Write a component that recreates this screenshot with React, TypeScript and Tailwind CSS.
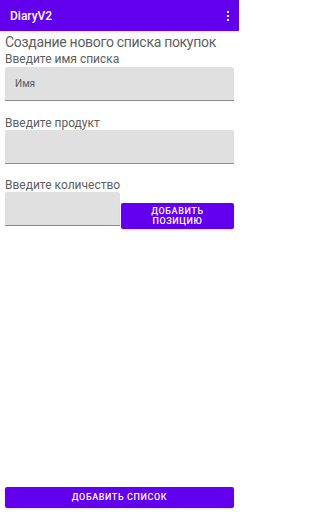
import React from "react";

function Field({ placeholder, className = "" }: { placeholder?: string; className?: string }) {
  return (
    <div
      className={`flex h-[34px] items-center rounded-t-[2px] border-b border-[#8c8c8c] bg-[#e0e0e0] px-[10px] ${className}`}
    >
      {placeholder && <span className="text-[10px] leading-none text-[#5a5a5a]">{placeholder}</span>}
    </div>
  );
}

export default function App() {
  return (
    <div
      className="flex min-h-[512px] w-[239px] flex-col bg-white"
      style={{ fontFamily: "Roboto, 'Noto Sans', sans-serif" }}
    >
      {/* App bar */}
      <header className="flex h-[31px] items-center justify-between bg-[#6200ee] pl-[10px] pr-[10px] shadow-sm">
        <span className="text-[12px] font-medium text-white">DiaryV2</span>
        <div className="flex flex-col gap-[2px]">
          <span className="h-[2px] w-[2px] bg-white" />
          <span className="h-[2px] w-[2px] bg-white" />
          <span className="h-[2px] w-[2px] bg-white" />
        </div>
      </header>

      <main className="flex flex-1 flex-col px-[5px]">
        <h1 className="mt-[3px] whitespace-nowrap text-[14px] leading-[16px] tracking-[-0.3px] text-[#5e5e5e]">
          Создание нового списка покупок
        </h1>
        <label className="mt-[2px] text-[12px] leading-[14px] text-[#5e5e5e]">Введите имя списка</label>
        <Field placeholder="Имя" className="mt-[1px]" />

        <label className="mt-[15px] text-[12px] leading-[14px] text-[#5e5e5e]">Введите продукт</label>
        <Field />

        <label className="mt-[14px] text-[12px] leading-[14px] text-[#5e5e5e]">Введите количество</label>
        <div className="flex items-start gap-[1px]">
          <Field className="w-[115px]" />
          <button className="mt-[11px] flex h-[26px] flex-1 flex-col items-center justify-center rounded-[2px] bg-[#6200ee] text-[9px] font-medium leading-[10px] tracking-[0.6px] text-white shadow">
            <span>ДОБАВИТЬ</span>
            <span>ПОЗИЦИЮ</span>
          </button>
        </div>

        <button className="mb-[4px] mt-auto h-[21px] w-full rounded-[2px] bg-[#6200ee] text-[9px] font-medium tracking-[0.6px] text-white shadow">
          ДОБАВИТЬ СПИСОК
        </button>
      </main>
    </div>
  );
}
